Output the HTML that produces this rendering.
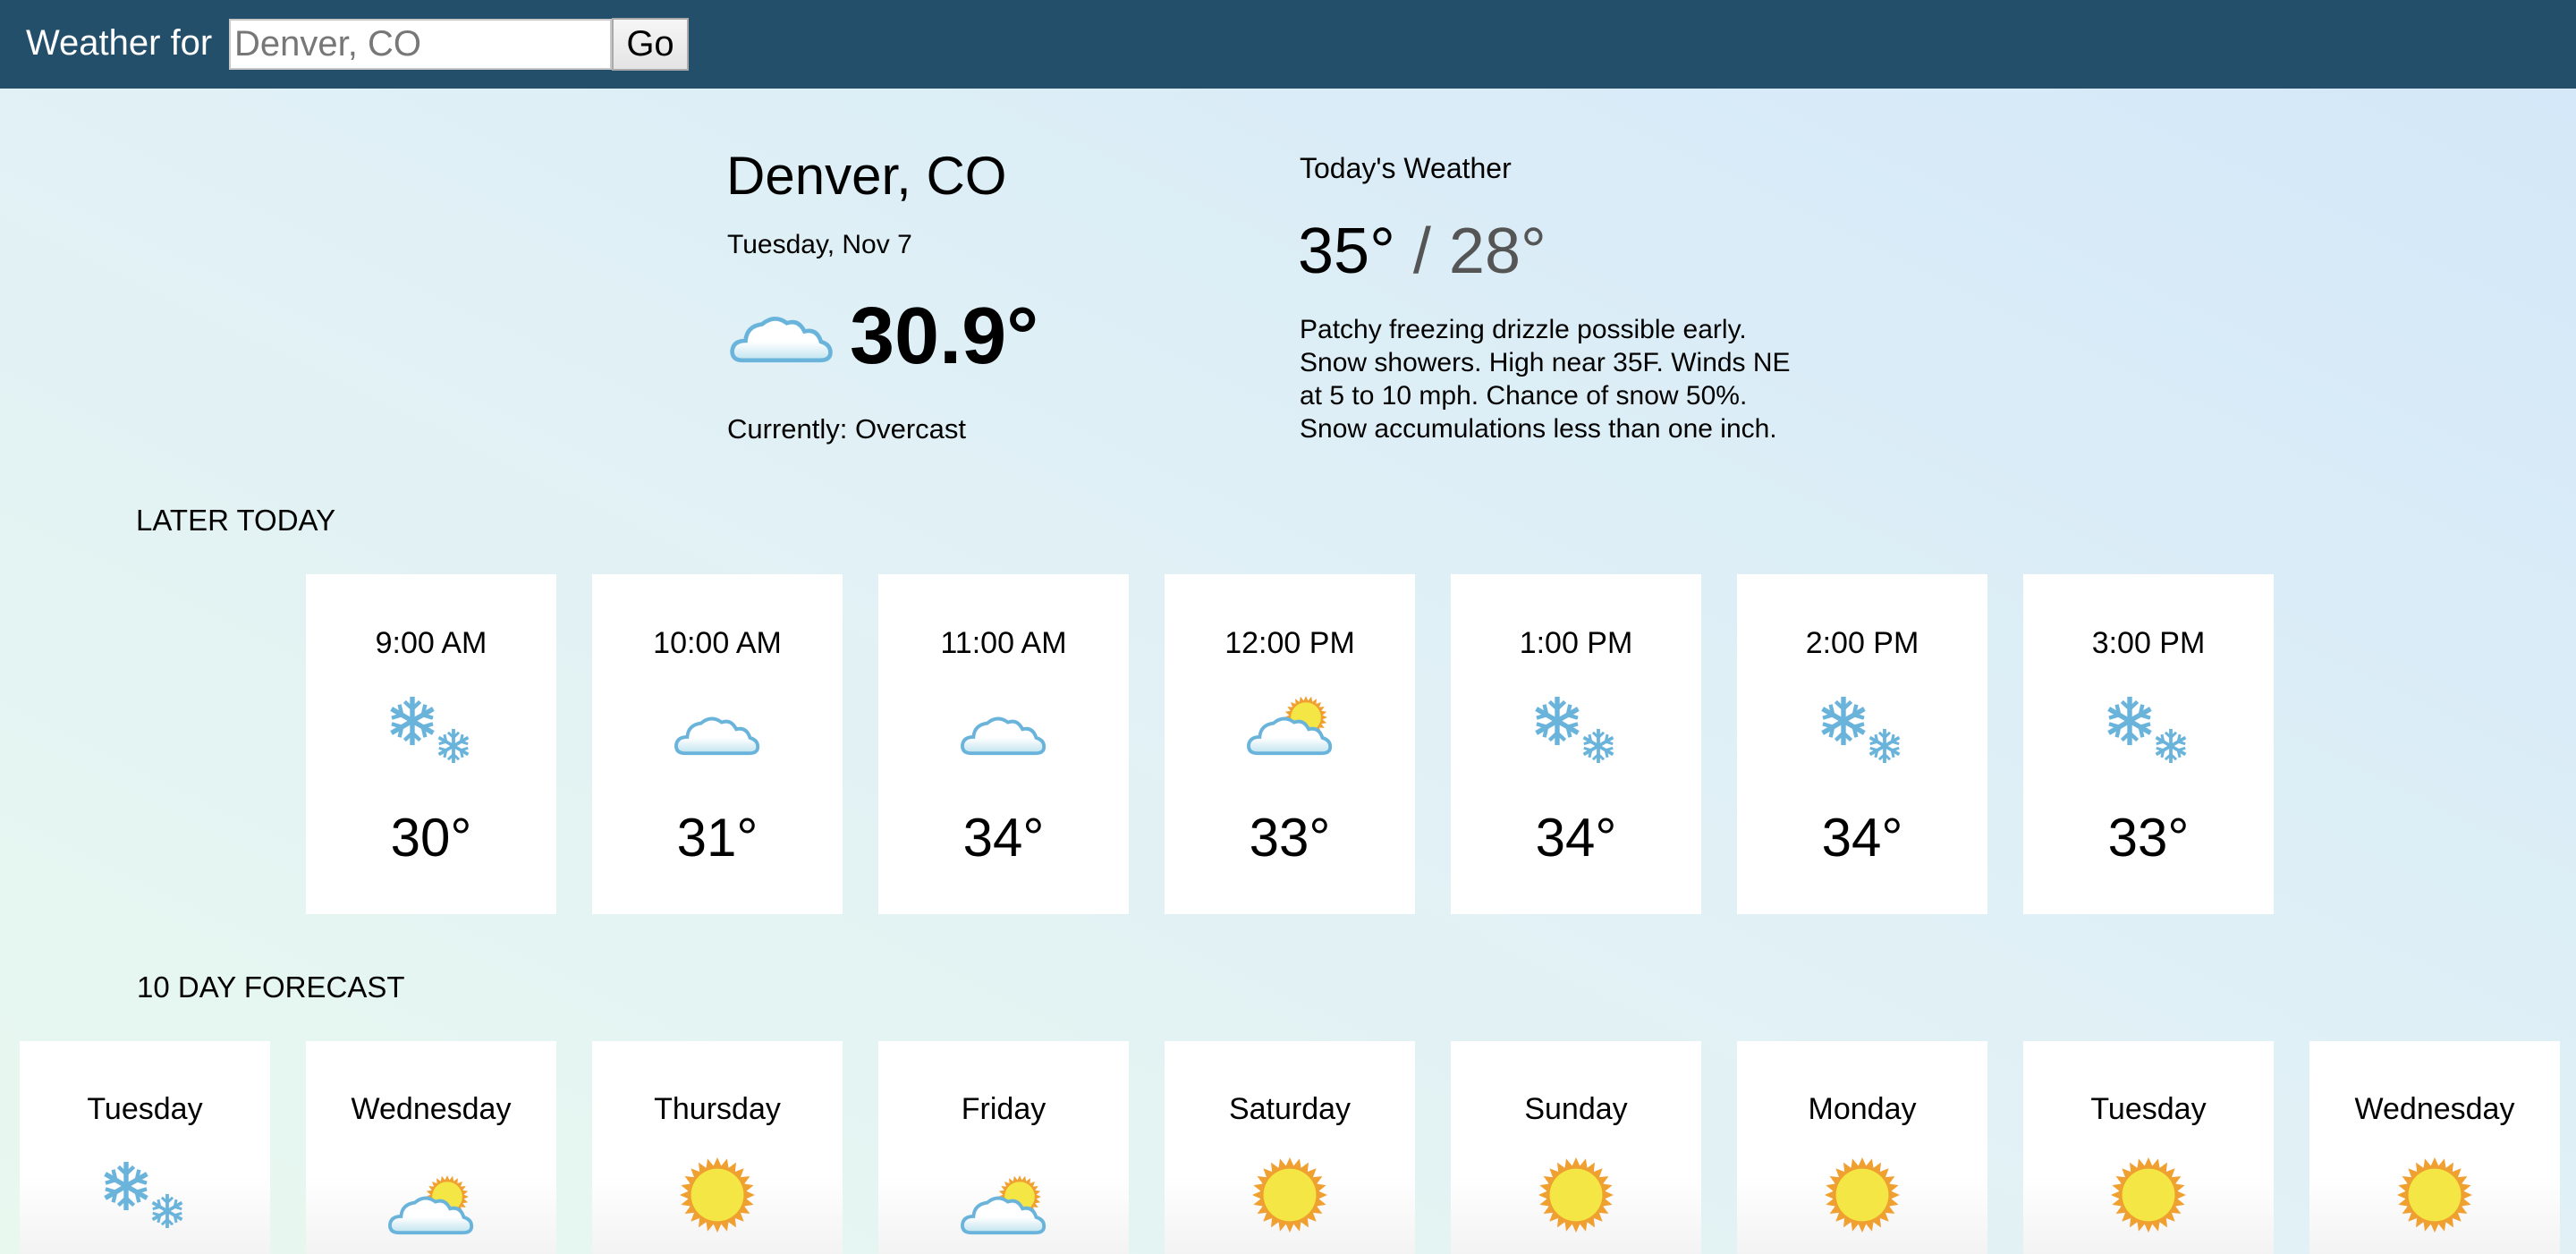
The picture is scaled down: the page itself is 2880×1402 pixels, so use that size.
<!DOCTYPE html>
<html><head><meta charset="utf-8"><style>
*{margin:0;padding:0;box-sizing:border-box}
html,body{width:2880px;height:1402px;overflow:hidden}
body{font-family:"Liberation Sans",Arial,sans-serif;color:#000;position:relative;
background:linear-gradient(to top right,#e8f8ef 0%,#e1f1f5 45%,#d3e7f9 100%);}
svg{overflow:visible}
.hdr{position:absolute;left:0;top:0;width:2880px;height:99px;background:#234f6a}
.hdr .lbl{position:absolute;left:29px;top:26px;font-size:40px;color:#fff}
.inp{position:absolute;left:256px;top:21px;width:428px;height:57px;background:#fff;border:2px solid #c8c8c8;font-size:40px;color:#777;padding-left:4px;line-height:52px}
.go{position:absolute;left:684px;top:20px;width:86px;height:59px;background:linear-gradient(#f6f6f6,#e4e4e4);border:2px solid #aaa;font-size:40px;text-align:center;line-height:55px}
.t{position:absolute;white-space:nowrap}
.card{position:absolute;width:280px;background:#fff;text-align:center}
.hc{top:642px;height:380px}
.hc .tm{position:absolute;left:0;right:0;top:58px;font-size:34px}
.hc .ic{position:absolute;left:90px;top:150px;width:100px;height:90px}
.hc .tp{position:absolute;left:0;right:0;top:260px;font-size:60px}
.dc{top:1164px;height:238px;background:linear-gradient(#fff 0,#fff 150px,#f3f3f3 238px)}
.dc .tm{position:absolute;left:0;right:0;top:57px;font-size:34px}
.dc .ic{position:absolute;left:90px;top:128px;width:100px;height:90px}
</style></head><body>
<div class="hdr"><div class="lbl">Weather for</div><div class="inp">Denver, CO</div><div class="go">Go</div></div>

<div class="t" style="left:812px;top:162px;font-size:60px">Denver, CO</div>
<div class="t" style="left:813px;top:257px;font-size:30px">Tuesday, Nov 7</div>
<svg class="t ico" style="left:815px;top:345px" width="118" height="66"></svg>
<div class="t" style="left:950px;top:325px;font-size:90px;font-weight:bold">30.9°</div>
<div class="t" style="left:813px;top:462px;font-size:31px">Currently: Overcast</div>

<div class="t" style="left:1453px;top:170px;font-size:32px">Today's Weather</div>
<div class="t" style="left:1451px;top:240px;font-size:72px">35° <span style="color:#555">/ 28°</span></div>
<div class="t" style="left:1453px;top:350px;font-size:30px;line-height:37px">Patchy freezing drizzle possible early.<br>Snow showers. High near 35F. Winds NE<br>at 5 to 10 mph. Chance of snow 50%.<br>Snow accumulations less than one inch.</div>

<div class="t" style="left:152px;top:563px;font-size:33px">LATER TODAY</div>
<div id="hours"></div>
<div class="t" style="left:153px;top:1085px;font-size:33px">10 DAY FORECAST</div>
<div id="days"></div>

<script>
var B='#6ab4dc';
function cloud(x,y,s){
 var p='M12 46 Q2 46 2 37 Q3 27 15 27 Q16 13 31 11 Q43 1 55 10 Q66 6 72 18 Q84 15 88 28 Q98 31 97 40 Q96 46 87 46 Z';
 return '<g transform="translate('+x+','+y+') scale('+s+')"><defs><linearGradient id="cg" x1="0" y1="0" x2="0" y2="1"><stop offset="0.55" stop-color="#fff"/><stop offset="1" stop-color="#bfe3ef"/></linearGradient></defs><path d="'+p+'" fill="url(#cg)" stroke="'+B+'" stroke-width="4"/></g>';
}
function flake(cx,cy,r){
 var s='';
 for(var i=0;i<3;i++){var a=i*60;
  s+='<g transform="translate('+cx+','+cy+') rotate('+a+')"><line x1="0" y1="-'+r+'" x2="0" y2="'+r+'" stroke="'+B+'" stroke-width="'+(r*0.2)+'"/>';
  [-1,1].forEach(function(d){var y=d*r*0.5,e=d*r*0.8;
   s+='<polyline points="'+(-r*0.32)+','+e+' 0,'+y+' '+(r*0.32)+','+e+'" fill="none" stroke="'+B+'" stroke-width="'+(r*0.16)+'"/>';});
  s+='</g>';}
 return s;
}
function sun(cx,cy,r){
 var pts=[];for(var i=0;i<48;i++){var a=i*Math.PI/24,rr=i%2?r*0.78:r;pts.push((cx+rr*Math.cos(a)).toFixed(1)+','+(cy+rr*Math.sin(a)).toFixed(1));}
 return '<polygon points="'+pts.join(' ')+'" fill="#f0a030"/><circle cx="'+cx+'" cy="'+cy+'" r="'+(r*0.7)+'" fill="#f4e745"/>';
}
function icon(k,dy){
 var o='<svg width="100" height="90" viewBox="0 0 100 90"><g transform="translate(0,'+dy+')">',c='</g></svg>';
 if(k=='cloud')return o+cloud(2,6,0.96)+c;
 if(k=='snow')return o+flake(29,14,27)+flake(75,42,19)+c;
 if(k=='pc')return o+sun(68,10,24)+cloud(2,6,0.96)+c;
 if(k=='sun')return '<svg width="100" height="90" viewBox="0 0 100 90">'+sun(50,44,42)+'</svg>';
}
var hs=[['9:00 AM','snow','30°'],['10:00 AM','cloud','31°'],['11:00 AM','cloud','34°'],['12:00 PM','pc','33°'],['1:00 PM','snow','34°'],['2:00 PM','snow','34°'],['3:00 PM','snow','33°']];
var h='';hs.forEach(function(d,i){h+='<div class="card hc" style="left:'+(342+i*320)+'px"><div class="tm">'+d[0]+'</div><div class="ic">'+icon(d[1],0)+'</div><div class="tp">'+d[2]+'</div></div>';});
document.getElementById('hours').innerHTML=h;
var ds=[['Tuesday','snow'],['Wednesday','pc'],['Thursday','sun'],['Friday','pc'],['Saturday','sun'],['Sunday','sun'],['Monday','sun'],['Tuesday','sun'],['Wednesday','sun']];
h='';ds.forEach(function(d,i){h+='<div class="card dc" style="left:'+(22+i*320)+'px"><div class="tm">'+d[0]+'</div><div class="ic">'+icon(d[1],d[1]=='pc'?36:20)+'</div></div>';});
document.getElementById('days').innerHTML=h;
var c=document.querySelector('svg.ico');c.setAttribute('viewBox','0 0 100 56');c.innerHTML=cloud(1,4,0.98);
</script>
</body></html>
